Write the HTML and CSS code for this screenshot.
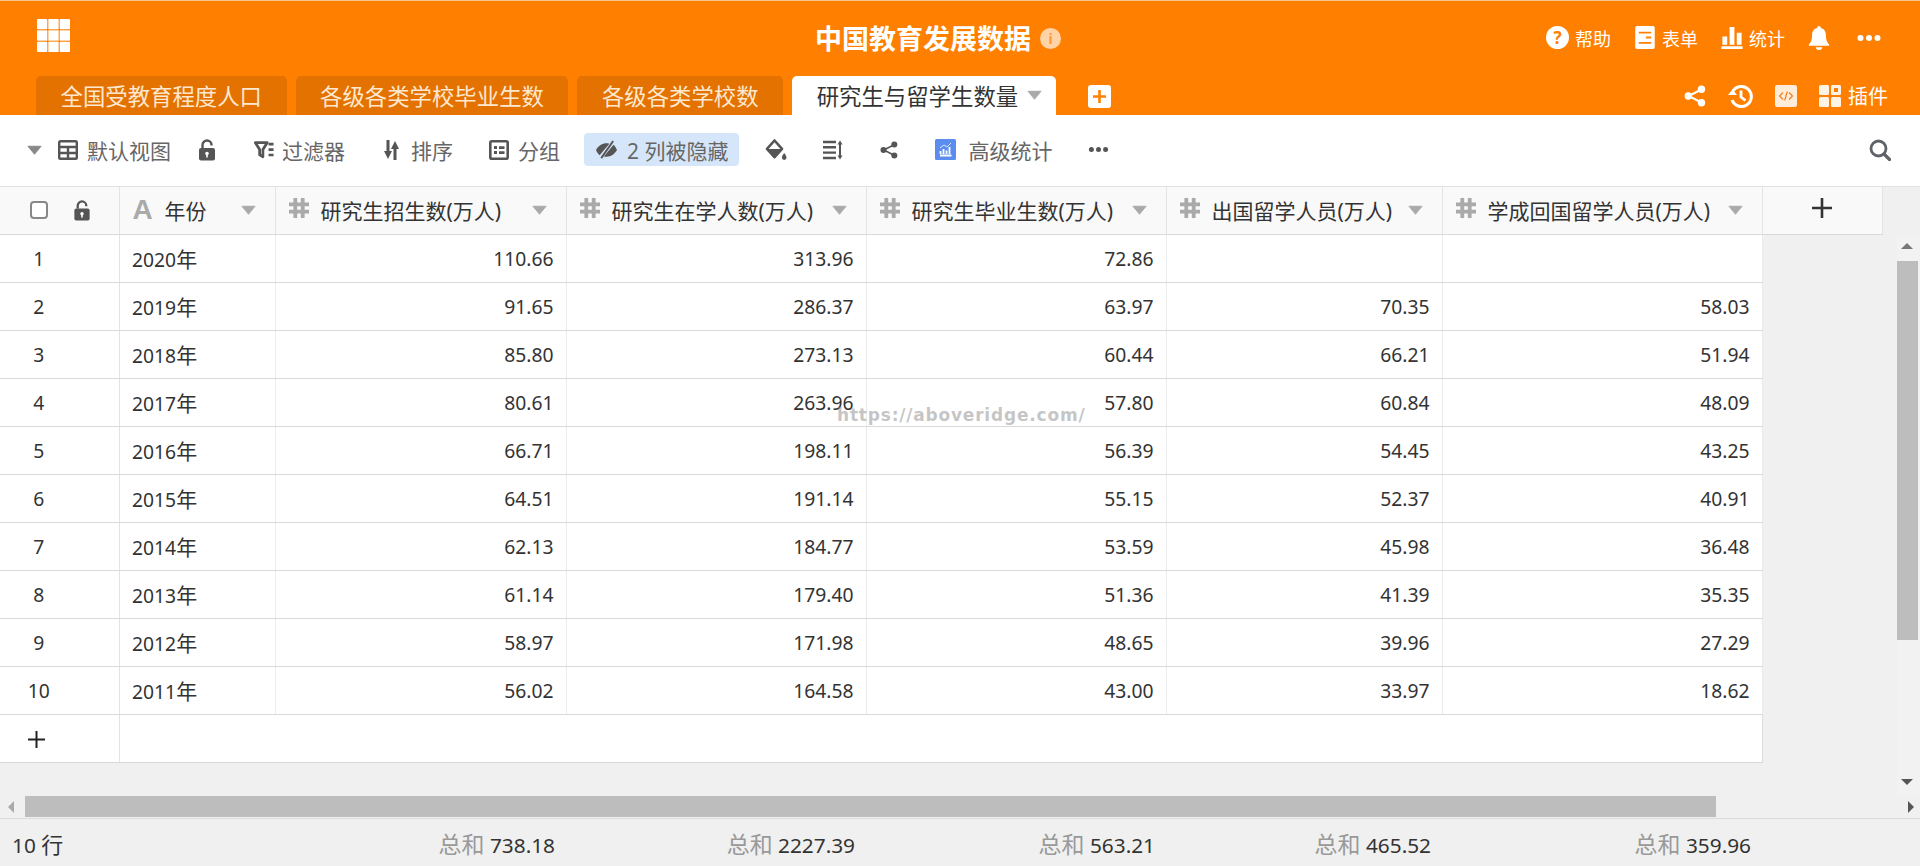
FILE: index.html
```html
<!DOCTYPE html>
<html lang="zh-CN">
<head>
    <meta charset="UTF-8">
    <title>中国教育发展数据</title>
    <link rel="stylesheet" href="styles.css">
</head>
<body>
    <svg class="sprite" xmlns="http://www.w3.org/2000/svg">
        <symbol id="caret" viewBox="0 0 16 10"><path d="M1 1h14L8 9.500z" fill="currentColor" stroke="currentColor" stroke-linejoin="round"/></symbol>
        <symbol id="lock" viewBox="0 0 18 22"><path d="M4.500 9V6a4.500 4.500 0 0 1 9 0v.5" fill="none" stroke="currentColor" stroke-width="2.400"/><rect x="1" y="9" width="16" height="12.500" rx="2" fill="currentColor"/><circle cx="9" cy="14.500" r="1.800" fill="#fff"/><rect x="8.200" y="15" width="1.600" height="3.500" fill="#fff"/></symbol>
        <symbol id="hash" viewBox="0 0 20 20" ><path d="M6.300 0v20M13.700 0v20M0 6.300h20M0 13.700h20" fill="none" stroke="currentColor" stroke-width="3.800"/></symbol>
        <symbol id="share" viewBox="0 0 22 22"><path d="M17.500 4.500L4.500 11l13 6.500" fill="none" stroke="currentColor" stroke-width="2"/><circle cx="17.500" cy="4.200" r="3.700" fill="currentColor"/><circle cx="4.300" cy="11" r="3.700" fill="currentColor"/><circle cx="17.500" cy="17.800" r="3.700" fill="currentColor"/></symbol>
        <symbol id="dots" viewBox="0 0 24 6"><circle cx="3.500" cy="3" r="3" fill="currentColor"/><circle cx="12" cy="3" r="3" fill="currentColor"/><circle cx="20.500" cy="3" r="3" fill="currentColor"/></symbol>
    </svg>

    <header class="topbar">
        <div class="topbar-row">
            <svg class="logo" viewBox="0 0 32 32"><g fill="#fff"><rect width="10" height="10" rx="1"/><rect x="11" width="10" height="10"/><rect x="22" width="10" height="10" rx="1"/><rect y="11" width="10" height="10"/><rect x="11" y="11" width="10" height="10"/><rect x="22" y="11" width="10" height="10"/><rect y="22" width="10" height="10" rx="1"/><rect x="11" y="22" width="10" height="10"/><rect x="22" y="22" width="10" height="10" rx="1"/></g></svg>
            <h1 class="title">中国教育发展数据</h1>
            <span class="info">i</span>
            <nav class="top-actions">
                <a class="top-link"><span class="help">?</span>帮助</a>
                <a class="top-link"><svg class="icon-22" viewBox="0 0 22 26"><path d="M2 0h18a2 2 0 0 1 2 2v22a2 2 0 0 1-2 2H2a2 2 0 0 1-2-2V2a2 2 0 0 1 2-2zM4 6.500v2h14v-2zM12 12v2.200h6V12zM4 18v2h14v-2z" fill="#fff" fill-rule="evenodd"/></svg>表单</a>
                <a class="top-link"><svg class="icon-22" viewBox="0 0 22 24"><path d="M0 21h22v3H0zM1 11h5v8.500H1zM8.500 1h5v18.500h-5zM16 7h5v12.500h-5z" fill="#fff"/></svg>统计</a>
                <svg class="bell" viewBox="0 0 22 26"><path d="M11 0a2 2 0 0 1 2 2.200C17 3.200 18.500 6.500 18.500 10c0 5 1 7.500 3.500 10v1.500H0V20c2.500-2.500 3.500-5 3.500-10 0-3.500 1.500-6.800 5.500-7.800A2 2 0 0 1 11 0zM7.500 23h7a3.500 3 0 0 1-7 0z" fill="#fff"/></svg>
                <svg class="dots-top"><use href="#dots"/></svg>
            </nav>
        </div>
        <div class="tabs-row">
            <div class="tab">全国受教育程度人口</div>
            <div class="tab">各级各类学校毕业生数</div>
            <div class="tab">各级各类学校数</div>
            <div class="tab tab-active">研究生与留学生数量<svg class="caret"><use href="#caret"/></svg></div>
            <div class="tab-add"><svg viewBox="0 0 23 23" width="23" height="23"><rect width="23" height="23" rx="3" fill="#fff"/><path d="M11.500 5v13M5 11.500h13" stroke="#ff8000" stroke-width="2.600"/></svg></div>
            <div class="tab-tools">
                <svg class="tt-icon"><use href="#share"/></svg>
                <svg class="tt-icon tt-history" viewBox="0 0 25 24"><path d="M5 7a10 10 0 1 1-1 9" fill="none" stroke="#fff" stroke-width="3"/><path d="M0 11h9l-4.500-5.500z" fill="#fff"/><path d="M13 6.500V13l4.500 3.500" fill="none" stroke="#fff" stroke-width="2.800"/></svg>
                <svg class="tt-icon" viewBox="0 0 22 22"><rect width="22" height="22" rx="2" fill="#fff" fill-opacity=".85"/><path d="M8 7.500L4.500 11 8 14.500M14 7.500l3.500 3.500-3.500 3.500M12.300 6.500l-2.600 9" fill="none" stroke="#f08020" stroke-width="1.200"/></svg>
                <a class="top-link plugin"><svg class="tt-icon" viewBox="0 0 22 22"><g fill="#fff" fill-opacity=".9"><rect width="10" height="10" rx="1.500"/><path d="M13.500 0h7A1.500 1.500 0 0 1 22 1.500v7a1.500 1.500 0 0 1-1.500 1.500h-7A1.500 1.500 0 0 1 12 8.500v-7A1.500 1.500 0 0 1 13.500 0zM15 3v4h4V3z" fill-rule="evenodd"/><rect y="12" width="10" height="10" rx="1.500"/><rect x="12" y="12" width="10" height="10" rx="1.500"/></g></svg>插件</a>
            </div>
        </div>
    </header>

    <div class="toolbar">
        <svg class="caret caret-view"><use href="#caret"/></svg>
        <a class="tool tool-view"><svg class="tool-icon" viewBox="0 0 20 20"><path d="M2.500 1.200h15a1.300 1.300 0 0 1 1.300 1.300v15a1.300 1.300 0 0 1-1.300 1.300h-15a1.300 1.300 0 0 1-1.300-1.300v-15a1.300 1.300 0 0 1 1.300-1.300zM1 7h18M1 13h18M10 7v12" fill="none" stroke="currentColor" stroke-width="2.400"/></svg>默认视图</a>
        <svg class="tool-lock"><use href="#lock"/></svg>
        <a class="tool tool-filter"><svg class="tool-icon icon-filter" viewBox="0 0 22 20"><path d="M1.500 2h13L9.800 9.500v8l-3.600-2.200V9.500z" fill="#fff" stroke="currentColor" stroke-width="3" stroke-linejoin="round"/><path d="M16 3.500h5.500M16 9.500h5.500M16 15.500h5.500" stroke="currentColor" stroke-width="3"/></svg>过滤器</a>
        <a class="tool tool-sort"><svg class="tool-icon icon-sort" viewBox="0 0 17 20"><path d="M3.500 0h3v11h2.500L5 19 1 11h2.500zM10.500 20h3V9H16L12 1 8 9h2.500z" fill="currentColor"/></svg>排序</a>
        <a class="tool"><svg class="tool-icon" viewBox="0 0 20 20"><rect x="1.300" y="1.300" width="17.400" height="17.400" rx="1.500" fill="none" stroke="currentColor" stroke-width="2.600"/><path d="M5 6h3v3H5zM10 6.200h5.500V9H10zM5 11h3v3H5zM10 11.200h5.500V14H10z" fill="currentColor"/></svg>分组</a>
        <a class="tool tool-pill"><svg class="tool-icon icon-eye" viewBox="0 0 22 20"><path d="M0 10c2.500-4.500 6.500-7 11-7 1 0 2 .1 3 .4L3.800 15.600C2.300 14.300 1 12.500 0 10zM22 10c-2.500 4.500-6.500 7-11 7-.9 0-1.800-.1-2.700-.3l10-12.300c1.600 1.300 2.700 3.200 3.700 5.600z" fill="currentColor"/><path d="M18 .5L5.500 18.500" stroke="currentColor" stroke-width="2"/></svg>2 列被隐藏</a>
        <svg class="tool-icon tool-solo icon-bucket" viewBox="0 0 22 22"><path d="M9.500 1.500l7.500 8.300-7.500 8.200L2 9.800z" fill="none" stroke="currentColor" stroke-width="2.600" stroke-linejoin="round"/><path d="M1 10h17l-8.500 9.500z" fill="currentColor"/><path d="M19.200 14c1.300 2 2.300 3.200 2.300 4.600a2.300 2.300 0 0 1-4.600 0c0-1.400 1-2.600 2.300-4.600z" fill="currentColor"/></svg>
        <svg class="tool-icon tool-solo" viewBox="0 0 20 20"><path d="M0 2h13M0 7.300h13M0 12.600h13M0 18h13" stroke="currentColor" stroke-width="2.400"/><path d="M17 3v14" stroke="currentColor" stroke-width="2"/><path d="M14.500 4.500L17 .5l2.500 4zM14.500 15.500L17 19.500l2.500-4z" fill="currentColor"/></svg>
        <svg class="tool-icon tool-solo tool-share"><use href="#share"/></svg>
        <a class="tool tool-stats"><svg class="tool-icon" viewBox="0 0 21 21"><rect width="21" height="21" rx="1.500" fill="#5b8def"/><path d="M5 16.500h11.500M5.500 15v-3M8.500 15v-5M11.500 15v-3.500M14.500 15V8" stroke="#fff" stroke-width="1.800"/><path d="M5 9l4-3 3 2 4-4" fill="none" stroke="#dfe8fb" stroke-width="1"/></svg>高级统计</a>
        <svg class="tool-dots"><use href="#dots"/></svg>
        <svg class="tool-search" viewBox="0 0 22 22"><circle cx="9.500" cy="9.500" r="7.500" fill="none" stroke="currentColor" stroke-width="2.800"/><path d="M15 15l5.500 5.500" stroke="currentColor" stroke-width="3.200" stroke-linecap="round"/></svg>
    </div>

    <main class="sheet">
        <div class="table-pane">
            <table class="data-table">
                <thead>
                    <tr>
                        <th class="col-num"><span class="num-head"><span class="checkbox"></span><svg class="head-lock"><use href="#lock"/></svg></span></th>
                        <th class="col-year"><span class="th-inner"><b class="type-a">A</b><span class="th-label">年份</span><svg class="caret"><use href="#caret"/></svg></span></th>
                        <th class="col-a"><span class="th-inner"><svg class="type-hash"><use href="#hash"/></svg><span class="th-label">研究生招生数(万人)</span><svg class="caret"><use href="#caret"/></svg></span></th>
                        <th class="col-b"><span class="th-inner"><svg class="type-hash"><use href="#hash"/></svg><span class="th-label">研究生在学人数(万人)</span><svg class="caret"><use href="#caret"/></svg></span></th>
                        <th class="col-b"><span class="th-inner"><svg class="type-hash"><use href="#hash"/></svg><span class="th-label">研究生毕业生数(万人)</span><svg class="caret"><use href="#caret"/></svg></span></th>
                        <th class="col-c"><span class="th-inner"><svg class="type-hash"><use href="#hash"/></svg><span class="th-label">出国留学人员(万人)</span><svg class="caret"><use href="#caret"/></svg></span></th>
                        <th class="col-d"><span class="th-inner"><svg class="type-hash"><use href="#hash"/></svg><span class="th-label">学成回国留学人员(万人)</span><svg class="caret"><use href="#caret"/></svg></span></th>
                        <th class="col-add"><svg viewBox="0 0 20 20" width="20" height="20"><path d="M10 0v20M0 10h20" stroke="#333" stroke-width="2.600"/></svg></th>
                    </tr>
                </thead>
                <tbody>
                    <tr><td class="rownum">1</td><td>2020<span class="unit">年</span></td><td class="val">110.66</td><td class="val">313.96</td><td class="val">72.86</td><td class="val"></td><td class="val"></td></tr>
                    <tr><td class="rownum">2</td><td>2019<span class="unit">年</span></td><td class="val">91.65</td><td class="val">286.37</td><td class="val">63.97</td><td class="val">70.35</td><td class="val">58.03</td></tr>
                    <tr><td class="rownum">3</td><td>2018<span class="unit">年</span></td><td class="val">85.80</td><td class="val">273.13</td><td class="val">60.44</td><td class="val">66.21</td><td class="val">51.94</td></tr>
                    <tr><td class="rownum">4</td><td>2017<span class="unit">年</span></td><td class="val">80.61</td><td class="val">263.96</td><td class="val">57.80</td><td class="val">60.84</td><td class="val">48.09</td></tr>
                    <tr><td class="rownum">5</td><td>2016<span class="unit">年</span></td><td class="val">66.71</td><td class="val">198.11</td><td class="val">56.39</td><td class="val">54.45</td><td class="val">43.25</td></tr>
                    <tr><td class="rownum">6</td><td>2015<span class="unit">年</span></td><td class="val">64.51</td><td class="val">191.14</td><td class="val">55.15</td><td class="val">52.37</td><td class="val">40.91</td></tr>
                    <tr><td class="rownum">7</td><td>2014<span class="unit">年</span></td><td class="val">62.13</td><td class="val">184.77</td><td class="val">53.59</td><td class="val">45.98</td><td class="val">36.48</td></tr>
                    <tr><td class="rownum">8</td><td>2013<span class="unit">年</span></td><td class="val">61.14</td><td class="val">179.40</td><td class="val">51.36</td><td class="val">41.39</td><td class="val">35.35</td></tr>
                    <tr><td class="rownum">9</td><td>2012<span class="unit">年</span></td><td class="val">58.97</td><td class="val">171.98</td><td class="val">48.65</td><td class="val">39.96</td><td class="val">27.29</td></tr>
                    <tr><td class="rownum">10</td><td>2011<span class="unit">年</span></td><td class="val">56.02</td><td class="val">164.58</td><td class="val">43.00</td><td class="val">33.97</td><td class="val">18.62</td></tr>
                    <tr class="add-row"><td class="rownum"><svg viewBox="0 0 17 17" width="17" height="17"><path d="M8.500 0v17M0 8.500h17" stroke="#222" stroke-width="2"/></svg></td><td colspan="6"></td></tr>
                </tbody>
            </table>
            <div class="vscroll">
                <i class="arrow arrow-up"></i>
                <div class="vscroll-thumb"></div>
                <i class="arrow arrow-down"></i>
            </div>
        </div>
        <div class="hscroll">
            <i class="arrow arrow-left"></i>
            <div class="hscroll-thumb"></div>
            <i class="arrow arrow-right"></i>
        </div>
        <footer class="summary">
            <span class="row-count">10 <span class="count-unit">行</span></span>
            <span></span>
            <span class="sum"><em>总和</em> 738.18</span>
            <span class="sum"><em>总和</em> 2227.39</span>
            <span class="sum"><em>总和</em> 563.21</span>
            <span class="sum"><em>总和</em> 465.52</span>
            <span class="sum"><em>总和</em> 359.96</span>
        </footer>
    </main>

    <div class="watermark">https://aboveridge.com/</div>
</body>
</html>
```

FILE: styles.css
```css
* {
    box-sizing: border-box;
}
html, body {
    height: 100%;
}
body {
    margin: 0;
    display: flex;
    flex-direction: column;
    height: 866px;
    overflow: hidden;
    position: relative;
    font-family: "Noto Sans", "Noto Sans CJK SC", sans-serif;
    font-size: 21px;
    color: #333;
    background: #f0f0f0;
}
.sprite {
    display: none;
}
.caret {
    width: 15px;
    height: 10px;
    color: #aaa;
    flex: none;
}

/* top orange bar */
.topbar {
    height: 115px;
    flex: none;
    background: #ff8000;
    border-top: 1px solid #f8c68c;
    color: #fff;
}
.topbar-row {
    height: 75px;
    display: flex;
    align-items: center;
    padding-left: 37px;
}
.logo {
    width: 33px;
    height: 33px;
    margin-top: -6px;
}
.title {
    margin: 0 0 0 745px;
    font-size: 27px;
    font-weight: 700;
    line-height: 1;
    white-space: nowrap;
}
.info {
    margin-left: 9px;
    width: 21px;
    height: 21px;
    border-radius: 50%;
    background: #ffd3a6;
    color: #f79a45;
    font-size: 14px;
    font-weight: 700;
    line-height: 21px;
    text-align: center;
}
.top-actions {
    margin-left: auto;
    margin-top: -2px;
    display: flex;
    align-items: center;
    padding-right: 39px;
}
.top-link {
    display: flex;
    align-items: center;
    gap: 6px;
    font-size: 18px;
    margin-right: 23px;
}
.help {
    width: 23px;
    height: 23px;
    border-radius: 50%;
    background: #fff;
    color: #ff8000;
    font-size: 17px;
    font-weight: 700;
    line-height: 23px;
    text-align: center;
}
.icon-22 {
    width: 22px;
    height: 23px;
}
.bell {
    width: 22px;
    height: 24px;
    margin-right: 27px;
}
.dots-top {
    width: 24px;
    height: 6px;
    color: #fff;
}

/* sheet tabs */
.tabs-row {
    height: 39px;
    display: flex;
    align-items: stretch;
    padding-left: 36px;
}
.tab {
    display: flex;
    align-items: center;
    justify-content: center;
    margin-right: 9px;
    padding: 0 24.500px 1px;
    background: #e37200;
    border-radius: 5px 5px 0 0;
    color: #ffe8d0;
    font-size: 22.400px;
    white-space: nowrap;
}
.tab-active {
    gap: 9px;
    padding: 0 14px 1px 24.500px;
    background: #fff;
    color: #333;
}
.tab-add {
    margin-left: 23px;
    padding-top: 9px;
}
.tab-tools {
    margin-left: auto;
    padding-right: 32px;
    display: flex;
    align-items: center;
    gap: 22px;
    color: #fff;
}
.tt-icon {
    width: 22px;
    height: 22px;
    color: #fff;
}
.tt-history {
    width: 25px;
    height: 24px;
}
.plugin {
    font-size: 20px;
    gap: 7px;
    margin: 0;
}

/* view toolbar */
.toolbar {
    height: 71px;
    flex: none;
    display: flex;
    align-items: center;
    padding: 0 29px 2px 27px;
    background: #fff;
    color: #666;
}
.caret-view {
    margin-right: 16px;
    color: #888;
}
.tool {
    display: flex;
    align-items: center;
    gap: 9px;
    margin-right: 38px;
    white-space: nowrap;
}
.tool-view {
    margin-right: 27px;
}
.tool-filter {
    gap: 8px;
}
.tool-sort {
    gap: 11px;
    margin-right: 36px;
}
.tool-icon {
    width: 20px;
    height: 20px;
    color: #555;
    flex: none;
}
.icon-filter {
    width: 20px;
}
.icon-sort {
    width: 17px;
}
.icon-eye {
    width: 21px;
    margin-right: 1px;
}
.icon-bucket {
    width: 22px;
    height: 22px;
}
.tool-lock {
    width: 18px;
    height: 22px;
    margin-right: 38px;
    color: #555;
}
.tool-pill {
    height: 33px;
    margin: 0 26px 0 -14px;
    padding: 0 11px 0 12px;
    background: #d6e6fa;
    border-radius: 4px;
}
.tool-solo {
    margin-right: 37px;
}
.tool-solo.icon-bucket {
    margin-right: 36px;
}
.tool-share {
    width: 18px;
}
.tool-stats {
    gap: 12px;
    margin-right: 36px;
}
.tool-stats .tool-icon {
    width: 21px;
    height: 21px;
}
.tool-dots {
    width: 21px;
    height: 5px;
    color: #555;
}
.tool-search {
    width: 22px;
    height: 22px;
    margin-left: auto;
    color: #5f6368;
}

/* table area */
.sheet {
    flex: 1;
    display: flex;
    flex-direction: column;
    min-height: 0;
}
.table-pane {
    flex: 1;
    position: relative;
    min-height: 0;
    overflow: hidden;
    border-top: 1px solid #e2e2e2;
}
.data-table {
    width: 1882px;
    table-layout: fixed;
    border-collapse: collapse;
}
.data-table th {
    height: 47px;
    padding: 0;
    background: #f9f9f9;
    border-right: 1px solid #e4e4e4;
    border-bottom: 1px solid #d9d9d9;
    font-weight: 400;
}
.col-num { width: 119px; }
.col-year { width: 156px; }
.col-a { width: 291px; }
.col-b { width: 300px; }
.col-c { width: 276px; }
.col-d { width: 320px; }
.col-add { width: 120px; }
.num-head {
    display: flex;
    align-items: center;
    padding-left: 30px;
}
.checkbox {
    width: 18px;
    height: 18px;
    border: 2px solid #888;
    border-radius: 4px;
    background: #fff;
}
.head-lock {
    width: 18px;
    height: 21px;
    margin-left: 25px;
    color: #555;
}
.th-inner {
    display: flex;
    align-items: center;
    padding: 0 19px 0 13px;
    white-space: nowrap;
}
.th-label {
    flex: 1;
    text-align: left;
    color: #333;
}
.type-a {
    width: 32px;
    font-family: "Liberation Sans", sans-serif;
    font-size: 28px;
    line-height: 1;
    color: #aaa;
    text-align: left;
}
.type-hash {
    width: 20px;
    height: 20px;
    margin-right: 12px;
    margin-top: -4px;
    color: #aaa;
}
.data-table td {
    height: 48px;
    padding: 0 12px 0 12.500px;
    background: #fff;
    border-right: 1px solid #ececec;
    border-bottom: 1px solid #d9d9d9;
    font-size: 19.300px;
    color: #333;
}
.data-table td.rownum {
    padding: 0 41px 0 0;
    border-right-color: #e4e4e4;
    text-align: center;
}
.unit {
    font-size: 21px;
}
.val {
    text-align: right;
}
.add-row .rownum svg {
    display: block;
    margin: 3px 0 0 28px;
}
.add-row td:last-child {
    border-right: 1px solid #ddd;
}

/* scrollbars */
.vscroll {
    position: absolute;
    top: 48px;
    right: 0;
    bottom: 0;
    width: 23px;
    background: #f2f2f2;
}
.vscroll-thumb {
    position: absolute;
    top: 26px;
    left: 0;
    right: 2px;
    height: 379px;
    background: #bdbdbd;
}
.arrow {
    position: absolute;
    width: 0;
    height: 0;
    border: 6px solid transparent;
}
.arrow-up {
    top: 8px;
    left: 4px;
    border-top: 0;
    border-bottom-color: #777;
}
.arrow-down {
    bottom: 11px;
    left: 4px;
    border-bottom: 0;
    border-top-color: #555;
}
.hscroll {
    height: 23px;
    flex: none;
    position: relative;
    border-bottom: 1px solid #dcdcdc;
}
.hscroll-thumb {
    position: absolute;
    top: 0;
    left: 25px;
    width: 1691px;
    height: 21px;
    background: #bdbdbd;
}
.arrow-left {
    top: 5px;
    left: 8px;
    border-left: 0;
    border-right-color: #aaa;
}
.arrow-right {
    top: 5px;
    right: 6px;
    border-right: 0;
    border-left-color: #555;
}

/* footer totals */
.summary {
    height: 47px;
    flex: none;
    display: grid;
    grid-template-columns: 120px 156px 291px 300px 300px 276px 320px;
    align-items: center;
    font-size: 20.800px;
    color: #333;
}
.row-count {
    padding-left: 12px;
    white-space: nowrap;
}
.count-unit {
    font-size: 22px;
}
.sum {
    padding-right: 12px;
    text-align: right;
}
.sum em {
    font-style: normal;
    font-size: 23px;
    color: #999;
}

.watermark {
    position: absolute;
    left: 837px;
    top: 405px;
    font-family: "DejaVu Sans", sans-serif;
    font-size: 17px;
    font-weight: 700;
    letter-spacing: .8px;
    color: rgba(140, 140, 140, .5);
    white-space: nowrap;
}
```
